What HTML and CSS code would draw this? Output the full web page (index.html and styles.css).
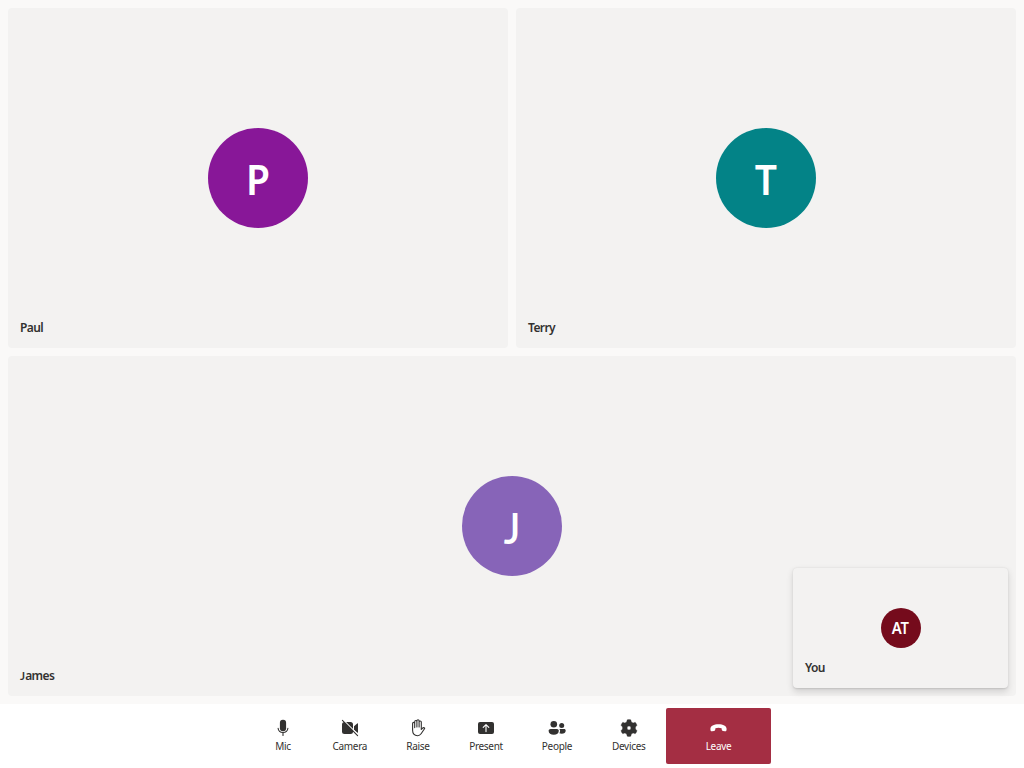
FILE: index.html
```html
<!DOCTYPE html>
<html lang="en">
<head>
<meta charset="utf-8">
<title>Group call</title>
<link rel="stylesheet" href="styles.css">
</head>
<body>
<main class="gallery">
  <section class="row">
    <article class="tile"><div class="avatar paul"><span>P</span></div><span class="name">Paul</span></article>
    <article class="tile"><div class="avatar terry"><span>T</span></div><span class="name">Terry</span></article>
  </section>
  <section class="row">
    <article class="tile"><div class="avatar james"><span>J</span></div><span class="name"><span class="initial">J</span>ames</span></article>
  </section>
  <article class="tile self"><div class="avatar you"><span>AT</span></div><span class="name">You</span></article>
</main>
<nav class="controls">
  <button class="control">
    <svg viewBox="0 0 20 20"><rect x="6.9" y="1.8" width="6.2" height="11.4" rx="3"/><path class="line" d="M5.100 10.200c.3 2.700 2.300 4.300 4.900 4.300s4.600-1.600 4.900-4.300M10 14.800v2.700"/></svg>
    <span class="label">Mic</span>
  </button>
  <button class="control">
    <svg viewBox="0 0 20 20"><rect x="2" y="4" width="11" height="12" rx="2.5"/><path d="M14 8.200l3.200-2.800c.4-.3.800-.1.800.4v8.400c0 .5-.4.7-.8.4L14 11.800z"/><path class="gap" d="M3.200 1.800l15 15"/><path class="line" d="M2.400 2.400l15.200 15.200"/></svg>
    <span class="label">Camera</span>
  </button>
  <button class="control">
    <svg viewBox="0 0 20 20"><path class="line" d="M4.600 11V5.400a1.050 1.050 0 0 1 2.100 0V9.600M6.700 9V3.600a1.100 1.100 0 0 1 2.200 0V9M8.900 8.800V2.900a1.100 1.100 0 0 1 2.200 0V9M11.100 9V4.100a1.100 1.100 0 0 1 2.200 0v7.400l1.100-1.200c.6-.7 1.500-.8 2.100-.3.2.2.2.5 0 .7l-3.400 5.100c-.9 1.300-1.900 1.900-3.500 1.900-3.500 0-5-2.400-5-5.400V10"/></svg>
    <span class="label">Raise</span>
  </button>
  <button class="control">
    <svg viewBox="0 0 20 20"><rect x="2" y="4" width="16" height="12" rx="2"/><path class="arrow" d="M10 13.600V6.800M7.200 9.400L10 6.600l2.800 2.800"/></svg>
    <span class="label">Present</span>
  </button>
  <button class="control">
    <svg viewBox="0 0 20 20"><circle cx="6.800" cy="6.300" r="3.300"/><circle cx="14.700" cy="7.500" r="2.500"/><path d="M3.600 11h6.400c1 0 1.800.8 1.800 1.800 0 2.600-2 4-5 4s-5.200-1.400-5.200-4c0-1 1-1.800 2-1.800zM12.200 11h4.900c1 0 1.600.7 1.600 1.500 0 2.200-1.600 3.300-4 3.300-.9 0-1.700-.2-2.300-.5.5-.8.7-1.600.7-2.500 0-.7-.3-1.300-.9-1.800z"/></svg>
    <span class="label">People</span>
  </button>
  <button class="control">
    <svg class="gear" viewBox="0 0 20 20"><path fill-rule="evenodd" d="M8.200 1.800Q10 1.200 11.800 1.800L12.400 3.900 14.100 4.900l2.100-.7q1.300 1.300 1.800 3.100l-1.500 1.700v2l1.500 1.700q-.5 1.800-1.800 3.100l-2.100-.7-1.700 1-.6 2.100q-1.800.6-3.600 0L7.600 16.100 5.900 15.100l-2.100.7Q2.500 14.500 2 12.700l1.500-1.700V9L2 7.300q.5-1.800 1.800-3.100l2.100.7 1.700-1zM10 8.100a1.900 1.900 0 1 0 0 3.800 1.900 1.900 0 0 0 0-3.800z"/></svg>
    <span class="label">Devices</span>
  </button>
  <button class="control leave">
    <svg viewBox="0 0 20 20"><path d="M9.500 6.300c4.700 0 7.900 1.700 8.100 4.500.1 1.900-.5 2.700-1.700 2.500l-1.900-.4c-.8-.2-1.200-.7-1.300-1.500l-.1-1.200c-2-.7-4.200-.7-6.200 0l-.1 1.200c-.1.800-.5 1.300-1.300 1.500l-1.900.4c-1.200.2-1.800-.6-1.700-2.500.2-2.800 3.400-4.500 8.100-4.500z"/></svg>
    <span class="label">Leave</span>
  </button>
</nav>
</body>
</html>
```
FILE: styles.css
```css
* { box-sizing: border-box; }
body {
  margin: 0;
  height: 768px;
  display: flex;
  flex-direction: column;
  overflow: hidden;
  background: #fff;
  color: #323130;
  font-family: "Noto Sans", "Open Sans", sans-serif;
}
.gallery {
  position: relative;
  height: 704px;
  padding: 8px;
  display: flex;
  flex-direction: column;
  gap: 8px;
  background: #faf9f8;
}
.row { flex: 1; display: flex; gap: 8px; }
.tile {
  flex: 1;
  display: grid;
  grid-template-areas: "tile";
  background: #f3f2f1;
  border-radius: 4px;
}
.avatar {
  grid-area: tile;
  place-self: center;
  display: grid;
  place-items: center;
  width: 100px;
  height: 100px;
  border-radius: 50%;
  color: #fff;
  font-size: 42px;
  line-height: 1;
  font-weight: 600;
  padding-top: 1px;
}
.avatar span { transform: scaleX(.93); }
.paul { background: #881798; }
.terry { background: #038387; }
.james { background: #8764b8; font-family: Lato, sans-serif; padding-top: 3px; }
.you {
  width: 40px;
  height: 40px;
  padding-top: 0;
  background: #750b1c;
  font-size: 16px;
  letter-spacing: -.1px;
}
.name {
  grid-area: tile;
  place-self: end start;
  margin: 0 0 12px 12px;
  font-size: 12px;
  line-height: 16px;
  font-weight: 600;
  letter-spacing: -.6px;
}
.initial { font-family: Lato, sans-serif; letter-spacing: 0; line-height: 1; }
.self {
  position: absolute;
  right: 16px;
  bottom: 16px;
  width: 215px;
  height: 120px;
  box-shadow: 0 3.2px 7.2px rgba(0,0,0,.132), 0 .6px 1.8px rgba(0,0,0,.108);
}
.controls {
  height: 64px;
  padding: 4px 0;
  display: grid;
  grid-template-columns: 60px 73.5px 63px 73px 69px 74.5px 105px;
  justify-content: center;
}
.control {
  padding: 10px 0 0;
  display: flex;
  flex-direction: column;
  align-items: center;
  border: 0;
  background: transparent;
  color: #323130;
  font-family: inherit;
}
.control svg { width: 20px; height: 20px; fill: currentColor; }
.control .line { fill: none; stroke: currentColor; stroke-width: 1.1; stroke-linecap: round; stroke-linejoin: round; }
.control .gap { fill: none; stroke: #fff; stroke-width: 1.2; }
.control .arrow { fill: none; stroke: #fff; stroke-width: 1.1; stroke-linecap: round; stroke-linejoin: round; }
.control .gear { stroke: currentColor; stroke-width: .3; stroke-linejoin: round; }
.label { font-size: 10px; line-height: 16px; letter-spacing: -.3px; white-space: nowrap; }
.leave { background: #a42e43; color: #fff; border-radius: 2px; }
```
